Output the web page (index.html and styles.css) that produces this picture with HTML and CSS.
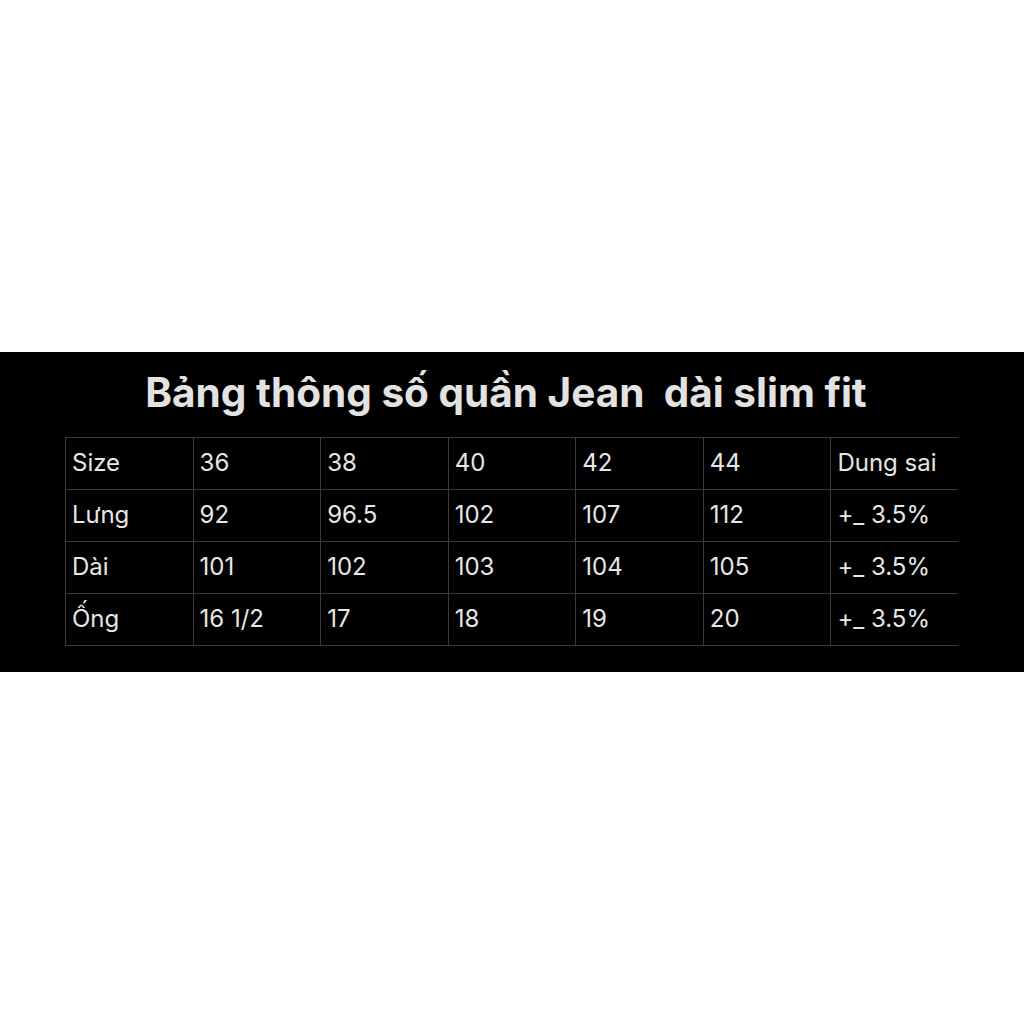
FILE: index.html
```html
<!DOCTYPE html>
<html lang="vi">
<head>
<meta charset="utf-8">
<link rel="stylesheet" href="styles.css">
</head>
<body>
<section class="band">
  <h1 class="title">Bảng thông số quần Jean&nbsp; dài slim fit</h1>
  <div class="table">
    <div class="cell">Size</div><div class="cell">36</div><div class="cell">38</div><div class="cell">40</div><div class="cell">42</div><div class="cell">44</div><div class="cell">Dung sai</div>
    <div class="cell">Lưng</div><div class="cell">92</div><div class="cell">96.5</div><div class="cell">102</div><div class="cell">107</div><div class="cell">112</div><div class="cell">+_ 3.5%</div>
    <div class="cell">Dài</div><div class="cell">101</div><div class="cell">102</div><div class="cell">103</div><div class="cell">104</div><div class="cell">105</div><div class="cell">+_ 3.5%</div>
    <div class="cell">Ống</div><div class="cell">16 1/2</div><div class="cell">17</div><div class="cell">18</div><div class="cell">19</div><div class="cell">20</div><div class="cell">+_ 3.5%</div>
  </div>
</section>
</body>
</html>
```
FILE: styles.css
```css
html, body {
  margin: 0;
  padding: 0;
  background: #ffffff;
}
body {
  font-family: Inter, "Noto Sans", sans-serif;
}
.band {
  margin-top: 352px;
  height: 320px;
  background: #000000;
  box-sizing: border-box;
  padding-top: 16px;
}
.title {
  margin: 0;
  padding-right: 12px;
  text-align: center;
  color: #e2e2e2;
  font-size: 40.5px;
  font-weight: 700;
  line-height: 50px;
  letter-spacing: 0;
}
.table {
  margin: 19px 0 0 65px;
  width: 893px;
  display: grid;
  grid-template-columns: repeat(7, 1fr);
  border-bottom: 1px solid #3a3a3a;
}
.cell {
  height: 52px;
  box-sizing: border-box;
  border-top: 1px solid #3a3a3a;
  border-left: 1px solid #3a3a3a;
  padding: 0 0 3px 6px;
  display: flex;
  align-items: center;
  color: #e6e6e6;
  font-size: 24px;
  font-weight: 400;
}
```
